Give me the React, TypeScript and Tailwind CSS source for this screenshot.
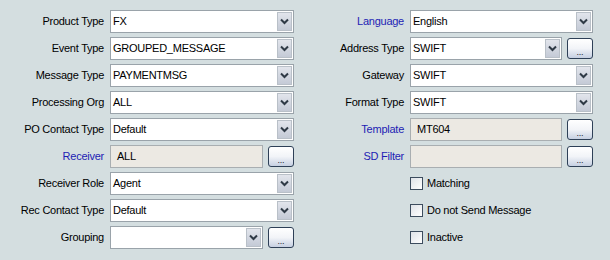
import React from 'react'

const font = { fontFamily: '"Liberation Sans", Arial, sans-serif' }

function Chevron() {
  return (
    <svg width="9" height="7" viewBox="0 0 9 7">
      <path d="M1 1.5 L4.5 5 L8 1.5" fill="none" stroke="#2f3a46" strokeWidth="2" />
    </svg>
  )
}

function Select({ value }: { value: string }) {
  return (
    <div className="flex h-[23px] flex-1 items-stretch border border-[#9aa3aa] bg-white">
      <span className="flex-1 truncate pl-[2px] leading-[21px]">{value}</span>
      <span className="m-[1px] flex w-[15px] items-center justify-center border border-[#b9c0c8] bg-gradient-to-b from-[#e2e5ec] to-[#c4cad6]">
        <Chevron />
      </span>
    </div>
  )
}

function ReadOnly({ value }: { value: string }) {
  return (
    <div className="flex h-[23px] flex-1 items-center border border-[#a9aeb1] bg-[#ece9e3] pl-[6px]">
      <span className="leading-[21px]">{value}</span>
    </div>
  )
}

function Dots() {
  return (
    <button className="ml-[5px] flex h-[21px] w-[26px] items-end justify-center rounded-[3px] border border-[#2e4057] bg-gradient-to-b from-white via-[#f2f4f8] to-[#c6d0e2] pb-[1px] text-[9px] leading-[10px] text-[#1a2230]">
      ...
    </button>
  )
}

function Row({ label, blue, labelW, children }: { label: string; blue?: boolean; labelW: string; children: React.ReactNode }) {
  return (
    <div className="flex h-[23px] items-center">
      <span className={`${labelW} shrink-0 pr-[6px] text-right ${blue ? 'text-[#1d1db4]' : 'text-black'}`}>{label}</span>
      <div className="flex flex-1 items-center">{children}</div>
    </div>
  )
}

function Check({ label }: { label: string }) {
  return (
    <div className="flex h-[23px] items-center pl-[116px]">
      <span className="h-[13px] w-[13px] border border-[#3c4c5e] bg-gradient-to-br from-[#dfe3e8] to-white" />
      <span className="ml-[4px]">{label}</span>
    </div>
  )
}

export default function App() {
  return (
    <div className="flex h-[260px] w-[610px] bg-[#d4dee0] pt-[10px] text-[11px] tracking-[-0.25px] text-black" style={font}>
      {/* left */}
      <div className="flex w-[294px] flex-col gap-[4px]">
        <Row label="Product Type" labelW="w-[110px]"><Select value="FX" /></Row>
        <Row label="Event Type" labelW="w-[110px]"><Select value="GROUPED_MESSAGE" /></Row>
        <Row label="Message Type" labelW="w-[110px]"><Select value="PAYMENTMSG" /></Row>
        <Row label="Processing Org" labelW="w-[110px]"><Select value="ALL" /></Row>
        <Row label="PO Contact Type" labelW="w-[110px]"><Select value="Default" /></Row>
        <Row label="Receiver" blue labelW="w-[110px]"><ReadOnly value="ALL" /><Dots /></Row>
        <Row label="Receiver Role" labelW="w-[110px]"><Select value="Agent" /></Row>
        <Row label="Rec Contact Type" labelW="w-[110px]"><Select value="Default" /></Row>
        <Row label="Grouping" labelW="w-[110px]"><Select value="" /><Dots /></Row>
      </div>
      {/* right */}
      <div className="flex w-[299px] flex-col gap-[4px]">
        <Row label="Language" blue labelW="w-[116px]"><Select value="English" /></Row>
        <Row label="Address Type" labelW="w-[116px]"><Select value="SWIFT" /><Dots /></Row>
        <Row label="Gateway" labelW="w-[116px]"><Select value="SWIFT" /></Row>
        <Row label="Format Type" labelW="w-[116px]"><Select value="SWIFT" /></Row>
        <Row label="Template" blue labelW="w-[116px]"><ReadOnly value="MT604" /><Dots /></Row>
        <Row label="SD Filter" blue labelW="w-[116px]"><ReadOnly value="" /><Dots /></Row>
        <Check label="Matching" />
        <Check label="Do not Send Message" />
        <Check label="Inactive" />
      </div>
    </div>
  )
}
